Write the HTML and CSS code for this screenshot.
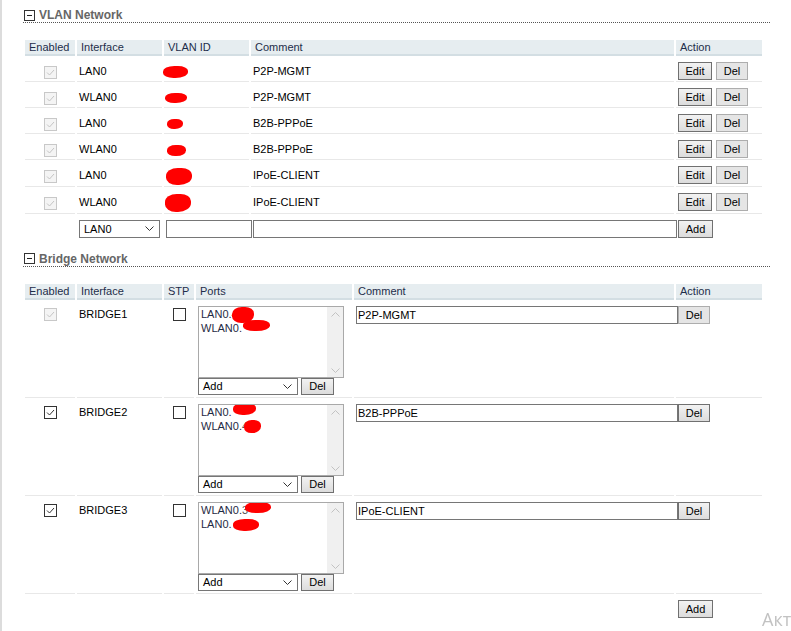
FILE: index.html
```html
<!DOCTYPE html>
<html lang="ru">
<head>
<meta charset="utf-8">
<title>Network</title>
<link rel="stylesheet" href="styles.css">
</head>
<body>
<div class="page">
  <div class="section-title"><span class="toggle"><span class="toggle-bar"></span></span>VLAN Network</div>
  <table class="grid">
    <colgroup>
      <col class="w-en"><col class="w-if"><col class="w-vid"><col class="w-vcom"><col class="w-act">
    </colgroup>
    <thead>
      <tr><th>Enabled</th><th>Interface</th><th>VLAN ID</th><th>Comment</th><th>Action</th></tr>
    </thead>
    <tbody>
      <tr>
        <td class="center"><span class="cb cb-dis"><svg viewBox="0 0 11 11" width="11" height="11"><path d="M2 5.5 L4.5 8 L9 3" fill="none" stroke="#c4c4c4" stroke-width="1"/></svg></span></td>
        <td>LAN0</td><td><span class="redact v1"></span></td><td>P2P-MGMT</td>
        <td><div class="actions"><button class="btn w-edit">Edit</button><button class="btn btn-light w-del">Del</button></div></td>
      </tr>
      <tr>
        <td class="center"><span class="cb cb-dis"><svg viewBox="0 0 11 11" width="11" height="11"><path d="M2 5.5 L4.5 8 L9 3" fill="none" stroke="#c4c4c4" stroke-width="1"/></svg></span></td>
        <td>WLAN0</td><td><span class="redact v2"></span></td><td>P2P-MGMT</td>
        <td><div class="actions"><button class="btn w-edit">Edit</button><button class="btn btn-light w-del">Del</button></div></td>
      </tr>
      <tr>
        <td class="center"><span class="cb cb-dis"><svg viewBox="0 0 11 11" width="11" height="11"><path d="M2 5.5 L4.5 8 L9 3" fill="none" stroke="#c4c4c4" stroke-width="1"/></svg></span></td>
        <td>LAN0</td><td><span class="redact v3"></span></td><td>B2B-PPPoE</td>
        <td><div class="actions"><button class="btn w-edit">Edit</button><button class="btn btn-light w-del">Del</button></div></td>
      </tr>
      <tr>
        <td class="center"><span class="cb cb-dis"><svg viewBox="0 0 11 11" width="11" height="11"><path d="M2 5.5 L4.5 8 L9 3" fill="none" stroke="#c4c4c4" stroke-width="1"/></svg></span></td>
        <td>WLAN0</td><td><span class="redact v4"></span></td><td>B2B-PPPoE</td>
        <td><div class="actions"><button class="btn w-edit">Edit</button><button class="btn btn-light w-del">Del</button></div></td>
      </tr>
      <tr>
        <td class="center"><span class="cb cb-dis"><svg viewBox="0 0 11 11" width="11" height="11"><path d="M2 5.5 L4.5 8 L9 3" fill="none" stroke="#c4c4c4" stroke-width="1"/></svg></span></td>
        <td>LAN0</td><td><span class="redact v5"></span></td><td>IPoE-CLIENT</td>
        <td><div class="actions"><button class="btn w-edit">Edit</button><button class="btn btn-light w-del">Del</button></div></td>
      </tr>
      <tr>
        <td class="center"><span class="cb cb-dis"><svg viewBox="0 0 11 11" width="11" height="11"><path d="M2 5.5 L4.5 8 L9 3" fill="none" stroke="#c4c4c4" stroke-width="1"/></svg></span></td>
        <td>WLAN0</td><td><span class="redact v6"></span></td><td>IPoE-CLIENT</td>
        <td><div class="actions"><button class="btn w-edit">Edit</button><button class="btn btn-light w-del">Del</button></div></td>
      </tr>
      <tr class="add-row">
        <td></td>
        <td><div class="select w-ifsel"><span>LAN0</span><svg viewBox="0 0 9 5" width="9" height="5"><path d="M0.5 0.5 L4.5 4.5 L8.5 0.5" fill="none" stroke="#333" stroke-width="1"/></svg></div></td>
        <td><input class="text w-vidin" type="text"></td>
        <td><input class="text w-vcomin" type="text"></td>
        <td><button class="btn w-add">Add</button></td>
      </tr>
    </tbody>
  </table>

  <div class="section-title second"><span class="toggle"><span class="toggle-bar"></span></span>Bridge Network</div>
  <table class="grid bridge">
    <colgroup>
      <col class="w-en"><col class="w-if"><col class="w-stp"><col class="w-ports"><col class="w-bcom"><col class="w-act">
    </colgroup>
    <thead>
      <tr><th>Enabled</th><th>Interface</th><th>STP</th><th>Ports</th><th>Comment</th><th>Action</th></tr>
    </thead>
    <tbody>
      <tr class="brow">
        <td class="center"><span class="cb cb-dis cb-top"><svg viewBox="0 0 11 11" width="11" height="11"><path d="M2 5.5 L4.5 8 L9 3" fill="none" stroke="#c4c4c4" stroke-width="1"/></svg></span></td>
        <td class="btext">BRIDGE1</td>
        <td class="center"><span class="cb cb-on cb-top"></span></td>
        <td>
          <div class="listbox">
            <div class="items">
              <div class="item">LAN0.<span class="digit">4</span><span class="redact p1a"></span></div>
              <div class="item">WLAN0.<span class="redact p1b"></span></div>
            </div>
            <div class="scroll">
              <svg viewBox="0 0 9 5" width="9" height="5"><path d="M0.5 4.5 L4.5 0.5 L8.5 4.5" fill="none" stroke="#c2c2c2" stroke-width="1"/></svg>
              <svg viewBox="0 0 9 5" width="9" height="5"><path d="M0.5 0.5 L4.5 4.5 L8.5 0.5" fill="none" stroke="#c2c2c2" stroke-width="1"/></svg>
            </div>
          </div>
          <div class="list-ctrl">
            <div class="select small w-addsel"><span>Add</span><svg viewBox="0 0 9 5" width="9" height="5"><path d="M0.5 0.5 L4.5 4.5 L8.5 0.5" fill="none" stroke="#333" stroke-width="1"/></svg></div>
            <button class="btn small w-ldel">Del</button>
          </div>
        </td>
        <td><input class="text w-bcomin" type="text" value="P2P-MGMT"></td>
        <td><button class="btn btn-light w-del">Del</button></td>
      </tr>
      <tr class="brow">
        <td class="center"><span class="cb cb-on cb-top"><svg viewBox="0 0 11 11" width="11" height="11"><path d="M2 5.5 L4.5 8 L9 3" fill="none" stroke="#333" stroke-width="1"/></svg></span></td>
        <td class="btext">BRIDGE2</td>
        <td class="center"><span class="cb cb-on cb-top"></span></td>
        <td>
          <div class="listbox">
            <div class="items">
              <div class="item">LAN0.<span class="redact p2a"></span></div>
              <div class="item">WLAN0.<span class="digit">4</span><span class="redact p2b"></span></div>
            </div>
            <div class="scroll">
              <svg viewBox="0 0 9 5" width="9" height="5"><path d="M0.5 4.5 L4.5 0.5 L8.5 4.5" fill="none" stroke="#c2c2c2" stroke-width="1"/></svg>
              <svg viewBox="0 0 9 5" width="9" height="5"><path d="M0.5 0.5 L4.5 4.5 L8.5 0.5" fill="none" stroke="#c2c2c2" stroke-width="1"/></svg>
            </div>
          </div>
          <div class="list-ctrl">
            <div class="select small w-addsel"><span>Add</span><svg viewBox="0 0 9 5" width="9" height="5"><path d="M0.5 0.5 L4.5 4.5 L8.5 0.5" fill="none" stroke="#333" stroke-width="1"/></svg></div>
            <button class="btn small w-ldel">Del</button>
          </div>
        </td>
        <td><input class="text w-bcomin" type="text" value="B2B-PPPoE"></td>
        <td><button class="btn w-del">Del</button></td>
      </tr>
      <tr class="brow">
        <td class="center"><span class="cb cb-on cb-top"><svg viewBox="0 0 11 11" width="11" height="11"><path d="M2 5.5 L4.5 8 L9 3" fill="none" stroke="#333" stroke-width="1"/></svg></span></td>
        <td class="btext">BRIDGE3</td>
        <td class="center"><span class="cb cb-on cb-top"></span></td>
        <td>
          <div class="listbox">
            <div class="items">
              <div class="item">WLAN0.<span class="digit">3</span><span class="redact p3a"></span></div>
              <div class="item">LAN0.<span class="redact p3b"></span></div>
            </div>
            <div class="scroll">
              <svg viewBox="0 0 9 5" width="9" height="5"><path d="M0.5 4.5 L4.5 0.5 L8.5 4.5" fill="none" stroke="#c2c2c2" stroke-width="1"/></svg>
              <svg viewBox="0 0 9 5" width="9" height="5"><path d="M0.5 0.5 L4.5 4.5 L8.5 0.5" fill="none" stroke="#c2c2c2" stroke-width="1"/></svg>
            </div>
          </div>
          <div class="list-ctrl">
            <div class="select small w-addsel"><span>Add</span><svg viewBox="0 0 9 5" width="9" height="5"><path d="M0.5 0.5 L4.5 4.5 L8.5 0.5" fill="none" stroke="#333" stroke-width="1"/></svg></div>
            <button class="btn small w-ldel">Del</button>
          </div>
        </td>
        <td><input class="text w-bcomin" type="text" value="IPoE-CLIENT"></td>
        <td><button class="btn w-del">Del</button></td>
      </tr>
      <tr class="add-row">
        <td></td><td></td><td></td><td></td><td></td>
        <td><button class="btn w-add">Add</button></td>
      </tr>
    </tbody>
  </table>
</div>
<div class="watermark">Акт</div>
</body>
</html>
```

FILE: styles.css
```css
html, body {
  margin: 0;
  padding: 0;
  overflow: hidden;
  background: #fff;
}

body {
  font-family: "Liberation Sans", Arial, sans-serif;
  font-size: 11px;
  color: #000;
}

.page {
  border-left: 2px solid #dcdcdc;
  min-height: 631px;
  box-sizing: border-box;
  padding-left: 21px;
}

.section-title {
  width: 747px;
  box-sizing: border-box;
  padding-top: 8px;
  height: 23px;
  line-height: 14px;
  border-bottom: 1px dotted #555;
  font-size: 12px;
  font-weight: bold;
  color: #666;
  display: flex;
  align-items: center;
}

.section-title.second {
  margin-top: 3px;
}

.toggle {
  width: 11px;
  height: 11px;
  box-sizing: border-box;
  border: 1px solid #333;
  margin-left: 1px;
  margin-right: 4px;
  display: flex;
  align-items: center;
  justify-content: center;
}

.toggle-bar {
  width: 5px;
  height: 1px;
  background: #222;
}

.grid {
  border-collapse: separate;
  border-spacing: 2px;
  table-layout: fixed;
  width: 741px;
  margin-top: 15px;
}

.w-en { width: 50px; }
.w-if { width: 85px; }
.w-vid { width: 85px; }
.w-vcom { width: 423px; }
.w-act { width: 86px; }
.w-stp { width: 30px; }
.w-ports { width: 156px; }
.w-bcom { width: 320px; }

.grid th {
  background: #e6edf0;
  border-bottom: 2px solid #d3dee3;
  padding: 0 4px;
  line-height: 14px;
  text-align: left;
  font-weight: normal;
  color: #1e2d4a;
  white-space: nowrap;
  overflow: hidden;
}

.grid td {
  padding: 4px 2px 1px;
  border-bottom: 1px solid #e8e8e8;
  line-height: 18px;
  vertical-align: middle;
  white-space: nowrap;
}

.grid td.center {
  text-align: center;
}

.grid tr.add-row td {
  border-bottom: none;
}

.grid tr.brow td {
  vertical-align: top;
  padding-bottom: 2px;
}

.grid td.btext {
  line-height: 17px;
}

.cb {
  display: inline-flex;
  align-items: center;
  justify-content: center;
  width: 13px;
  height: 13px;
  box-sizing: border-box;
  vertical-align: middle;
  background: #fff;
}

.cb-dis {
  border: 1px solid #c8c8c8;
  background: #f4f4f4;
}

.cb-on {
  border: 1px solid #333;
}

.cb-top {
  vertical-align: top;
  margin-top: 2px;
}

.actions {
  display: flex;
  gap: 4px;
}

.btn {
  font-family: "Liberation Sans", Arial, sans-serif;
  font-size: 11px;
  color: #000;
  height: 18px;
  padding: 0;
  margin: 0;
  border: 1px solid #707070;
  border-radius: 0;
  background: linear-gradient(#f2f2f2, #dcdcdc);
  box-sizing: border-box;
  line-height: 14px;
  display: block;
}

.btn-light {
  border-color: #adadad;
  background: #e5e5e5;
}

.btn.small {
  height: 17px;
}

.w-edit { width: 34px; }
.w-del { width: 32px; }
.w-add { width: 35px; }
.w-ldel { width: 33px; }

.text {
  font-family: "Liberation Sans", Arial, sans-serif;
  font-size: 11px;
  color: #000;
  height: 18px;
  box-sizing: border-box;
  border: 1px solid #767676;
  border-radius: 0;
  padding: 0 1px;
  margin: 0;
  display: block;
  outline: none;
}

.w-vidin { width: 86px; }
.w-vcomin { width: 424px; }
.w-bcomin { width: 322px; }

.select {
  display: flex;
  align-items: center;
  justify-content: space-between;
  height: 18px;
  box-sizing: border-box;
  border: 1px solid #767676;
  padding: 0 5px 0 4px;
  background: #fff;
  line-height: 14px;
}

.select.small {
  height: 17px;
}

.w-ifsel { width: 81px; }
.w-addsel { width: 100px; }

.listbox {
  width: 146px;
  height: 72px;
  box-sizing: border-box;
  border: 1px solid #a9a9a9;
  display: flex;
}

.items {
  flex: 1;
  padding: 0 2px;
  line-height: 14px;
  color: #1f2a44;
  overflow: hidden;
}

.item {
  white-space: nowrap;
}

.digit {
  color: #555;
}

.scroll {
  width: 16px;
  background: #f0f0f0;
  display: flex;
  flex-direction: column;
  align-items: center;
  justify-content: space-between;
  padding: 5px 0 4px;
  box-sizing: border-box;
}

.list-ctrl {
  display: flex;
  gap: 3px;
  line-height: 14px;
}

.redact {
  display: inline-block;
  background: #ff0000;
  vertical-align: middle;
  border-radius: 45% 40% 50% 42%;
}

.v1 { width: 25px; height: 12px; margin-left: -3px; }
.v2 { width: 22px; height: 10px; margin-left: -1px; }
.v3 { width: 16px; height: 10px; margin-left: 1px; }
.v4 { width: 19px; height: 11px; margin-left: 1px; }
.v5 { width: 26px; height: 17px; margin-left: 0; }
.v6 { width: 26px; height: 18px; margin-left: -1px; }

.p1a { width: 22px; height: 16px; margin: -4px 0 -4px -6px; }
.p1b { width: 27px; height: 11px; margin: -2px 0 0 1px; vertical-align: 1px; }
.p2a { width: 23px; height: 12px; margin: -2px 0 0 1px; vertical-align: 1px; }
.p2b { width: 17px; height: 13px; margin: -2px 0 -2px -4px; }
.p3a { width: 26px; height: 11px; margin: -2px 0 0 -3px; vertical-align: 1px; }
.p3b { width: 26px; height: 12px; margin: -2px 0 -2px 1px; }

.watermark {
  position: fixed;
  left: 762px;
  top: 607px;
  font-family: "Open Sans", "Liberation Sans", sans-serif;
  font-size: 18px;
  color: #c2c2c2;
  white-space: nowrap;
}
```
